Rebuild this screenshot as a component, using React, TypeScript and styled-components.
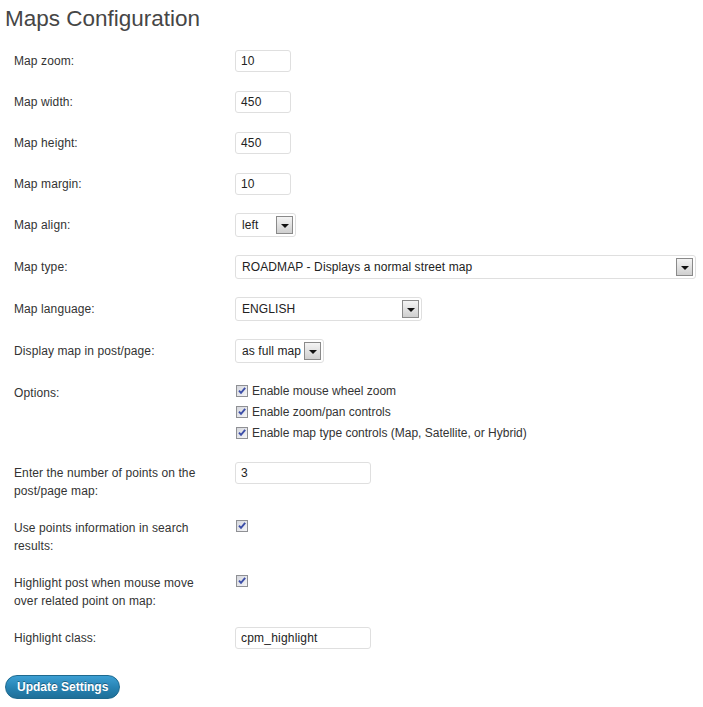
import React from "react";
import styled, { createGlobalStyle } from "styled-components";

const Global = createGlobalStyle`
  html, body { margin: 0; padding: 0; background: #ffffff; }
  body { font-family: "Liberation Sans", Arial, sans-serif; font-size: 12px; color: #333333; }
`;

const Wrap = styled.div`
  padding: 0 5px;
  width: 693px;
  box-sizing: border-box;
`;

const Title = styled.h2`
  margin: 4px 0 7px;
  font-family: "Liberation Sans", Arial, sans-serif;
  font-size: 22.5px;
  line-height: 29px;
  font-weight: normal;
  color: #464646;
`;

const Form = styled.div`
  display: flex;
  flex-direction: column;
`;

const Row = styled.div`
  display: grid;
  grid-template-columns: 195px 1fr;
  column-gap: 26px;
  padding: 10px 0 9px 9px;
  align-items: start;
`;

const Label = styled.div<{ $shift?: number }>`
  line-height: 18px;
  color: #333333;
  margin-top: ${(p) => p.$shift ?? 2}px;
  margin-bottom: -2px;
  letter-spacing: 0.1px;
`;

const TextInput = styled.div<{ $w: number }>`
  box-sizing: border-box;
  width: ${(p) => p.$w}px;
  height: 22px;
  border: 1px solid #dfdfdf;
  border-radius: 3px;
  background: #ffffff;
  padding: 0 5px;
  line-height: 20px;
  font-size: 12px;
  color: #222222;
  letter-spacing: 0.2px;
`;

const SelectBox = styled.div<{ $w: number }>`
  position: relative;
  box-sizing: border-box;
  width: ${(p) => p.$w}px;
  height: 24px;
  margin: -1px 0 0;
  border: 1px solid #dfdfdf;
  border-radius: 3px;
  background: #ffffff;
  padding: 0 6px;
  line-height: 22px;
  font-size: 12px;
  color: #222222;
  white-space: nowrap;
  overflow: hidden;
  letter-spacing: 0.1px;
`;

const Arrow = styled.span`
  position: absolute;
  right: 2px;
  top: 2px;
  width: 17px;
  height: 18px;
  box-sizing: border-box;
  border: 1px solid #8a8a8a;
  background: linear-gradient(#f4f4f4, #cfcfcf);
  display: flex;
  align-items: center;
  justify-content: center;
`;

const Tri = styled.span`
  width: 0;
  height: 0;
  border-left: 4px solid transparent;
  border-right: 4px solid transparent;
  border-top: 4px solid #111111;
  margin-top: 1px;
`;

const CheckList = styled.div`
  display: flex;
  flex-direction: column;
  margin-top: -2px;
`;

const CheckLine = styled.div`
  display: flex;
  align-items: center;
  height: 21px;
  gap: 4px;
`;

const BoxWrap = styled.span<{ $top?: number }>`
  display: inline-flex;
  margin-left: 1px;
  margin-top: ${(p) => p.$top ?? 0}px;
  width: 12px;
  height: 12px;
`;

const Button = styled.div`
  display: inline-flex;
  align-items: center;
  box-sizing: border-box;
  height: 24px;
  margin-top: 17px;
  padding: 0 11px;
  border: 1px solid #1e6a8f;
  border-radius: 12px;
  background: linear-gradient(#3c9fd3, #2682b2 55%, #1f6f98);
  color: #ffffff;
  font-weight: bold;
  font-size: 12px;
  text-shadow: 0 -1px 0 rgba(0, 0, 0, 0.35);
`;

const Check = ({ top }: { top?: number }) => (
  <BoxWrap $top={top}>
    <svg width="12" height="12" viewBox="0 0 12 12">
      <defs>
        <linearGradient id="cbg" x1="0" y1="0" x2="1" y2="1">
          <stop offset="0" stopColor="#d4d6dc" />
          <stop offset="1" stopColor="#f6f6f8" />
        </linearGradient>
      </defs>
      <rect x="0.5" y="0.5" width="11" height="11" fill="url(#cbg)" stroke="#8f9094" />
      <path d="M3 5.6 L5 7.8 L9.2 2.8" fill="none" stroke="#3c4ea8" strokeWidth="1.9" />
    </svg>
  </BoxWrap>
);

const Select = ({ w, value }: { w: number; value: string }) => (
  <SelectBox $w={w}>
    {value}
    <Arrow>
      <Tri />
    </Arrow>
  </SelectBox>
);

export default function App() {
  return (
    <Wrap>
      <Global />
      <Title>Maps Configuration</Title>
      <Form>
        <Row>
          <Label>Map zoom:</Label>
          <TextInput $w={56}>10</TextInput>
        </Row>
        <Row>
          <Label>Map width:</Label>
          <TextInput $w={56}>450</TextInput>
        </Row>
        <Row>
          <Label>Map height:</Label>
          <TextInput $w={56}>450</TextInput>
        </Row>
        <Row>
          <Label>Map margin:</Label>
          <TextInput $w={56}>10</TextInput>
        </Row>
        <Row>
          <Label>Map align:</Label>
          <Select w={61} value="left" />
        </Row>
        <Row>
          <Label>Map type:</Label>
          <Select w={461} value="ROADMAP - Displays a normal street map" />
        </Row>
        <Row>
          <Label>Map language:</Label>
          <Select w={187} value="ENGLISH" />
        </Row>
        <Row>
          <Label>Display map in post/page:</Label>
          <Select w={89} value="as full map" />
        </Row>
        <Row>
          <Label>Options:</Label>
          <CheckList>
            <CheckLine>
              <Check />
              Enable mouse wheel zoom
            </CheckLine>
            <CheckLine>
              <Check />
              Enable zoom/pan controls
            </CheckLine>
            <CheckLine>
              <Check />
              Enable map type controls (Map, Satellite, or Hybrid)
            </CheckLine>
          </CheckList>
        </Row>
        <Row>
          <Label>Enter the number of points on the post/page map:</Label>
          <TextInput $w={136}>3</TextInput>
        </Row>
        <Row>
          <Label>Use points information in search results:</Label>
          <Check top={3} />
        </Row>
        <Row>
          <Label>Highlight post when mouse move over related point on map:</Label>
          <Check top={3} />
        </Row>
        <Row>
          <Label>Highlight class:</Label>
          <TextInput $w={136}>cpm_highlight</TextInput>
        </Row>
      </Form>
      <Button>Update Settings</Button>
    </Wrap>
  );
}
